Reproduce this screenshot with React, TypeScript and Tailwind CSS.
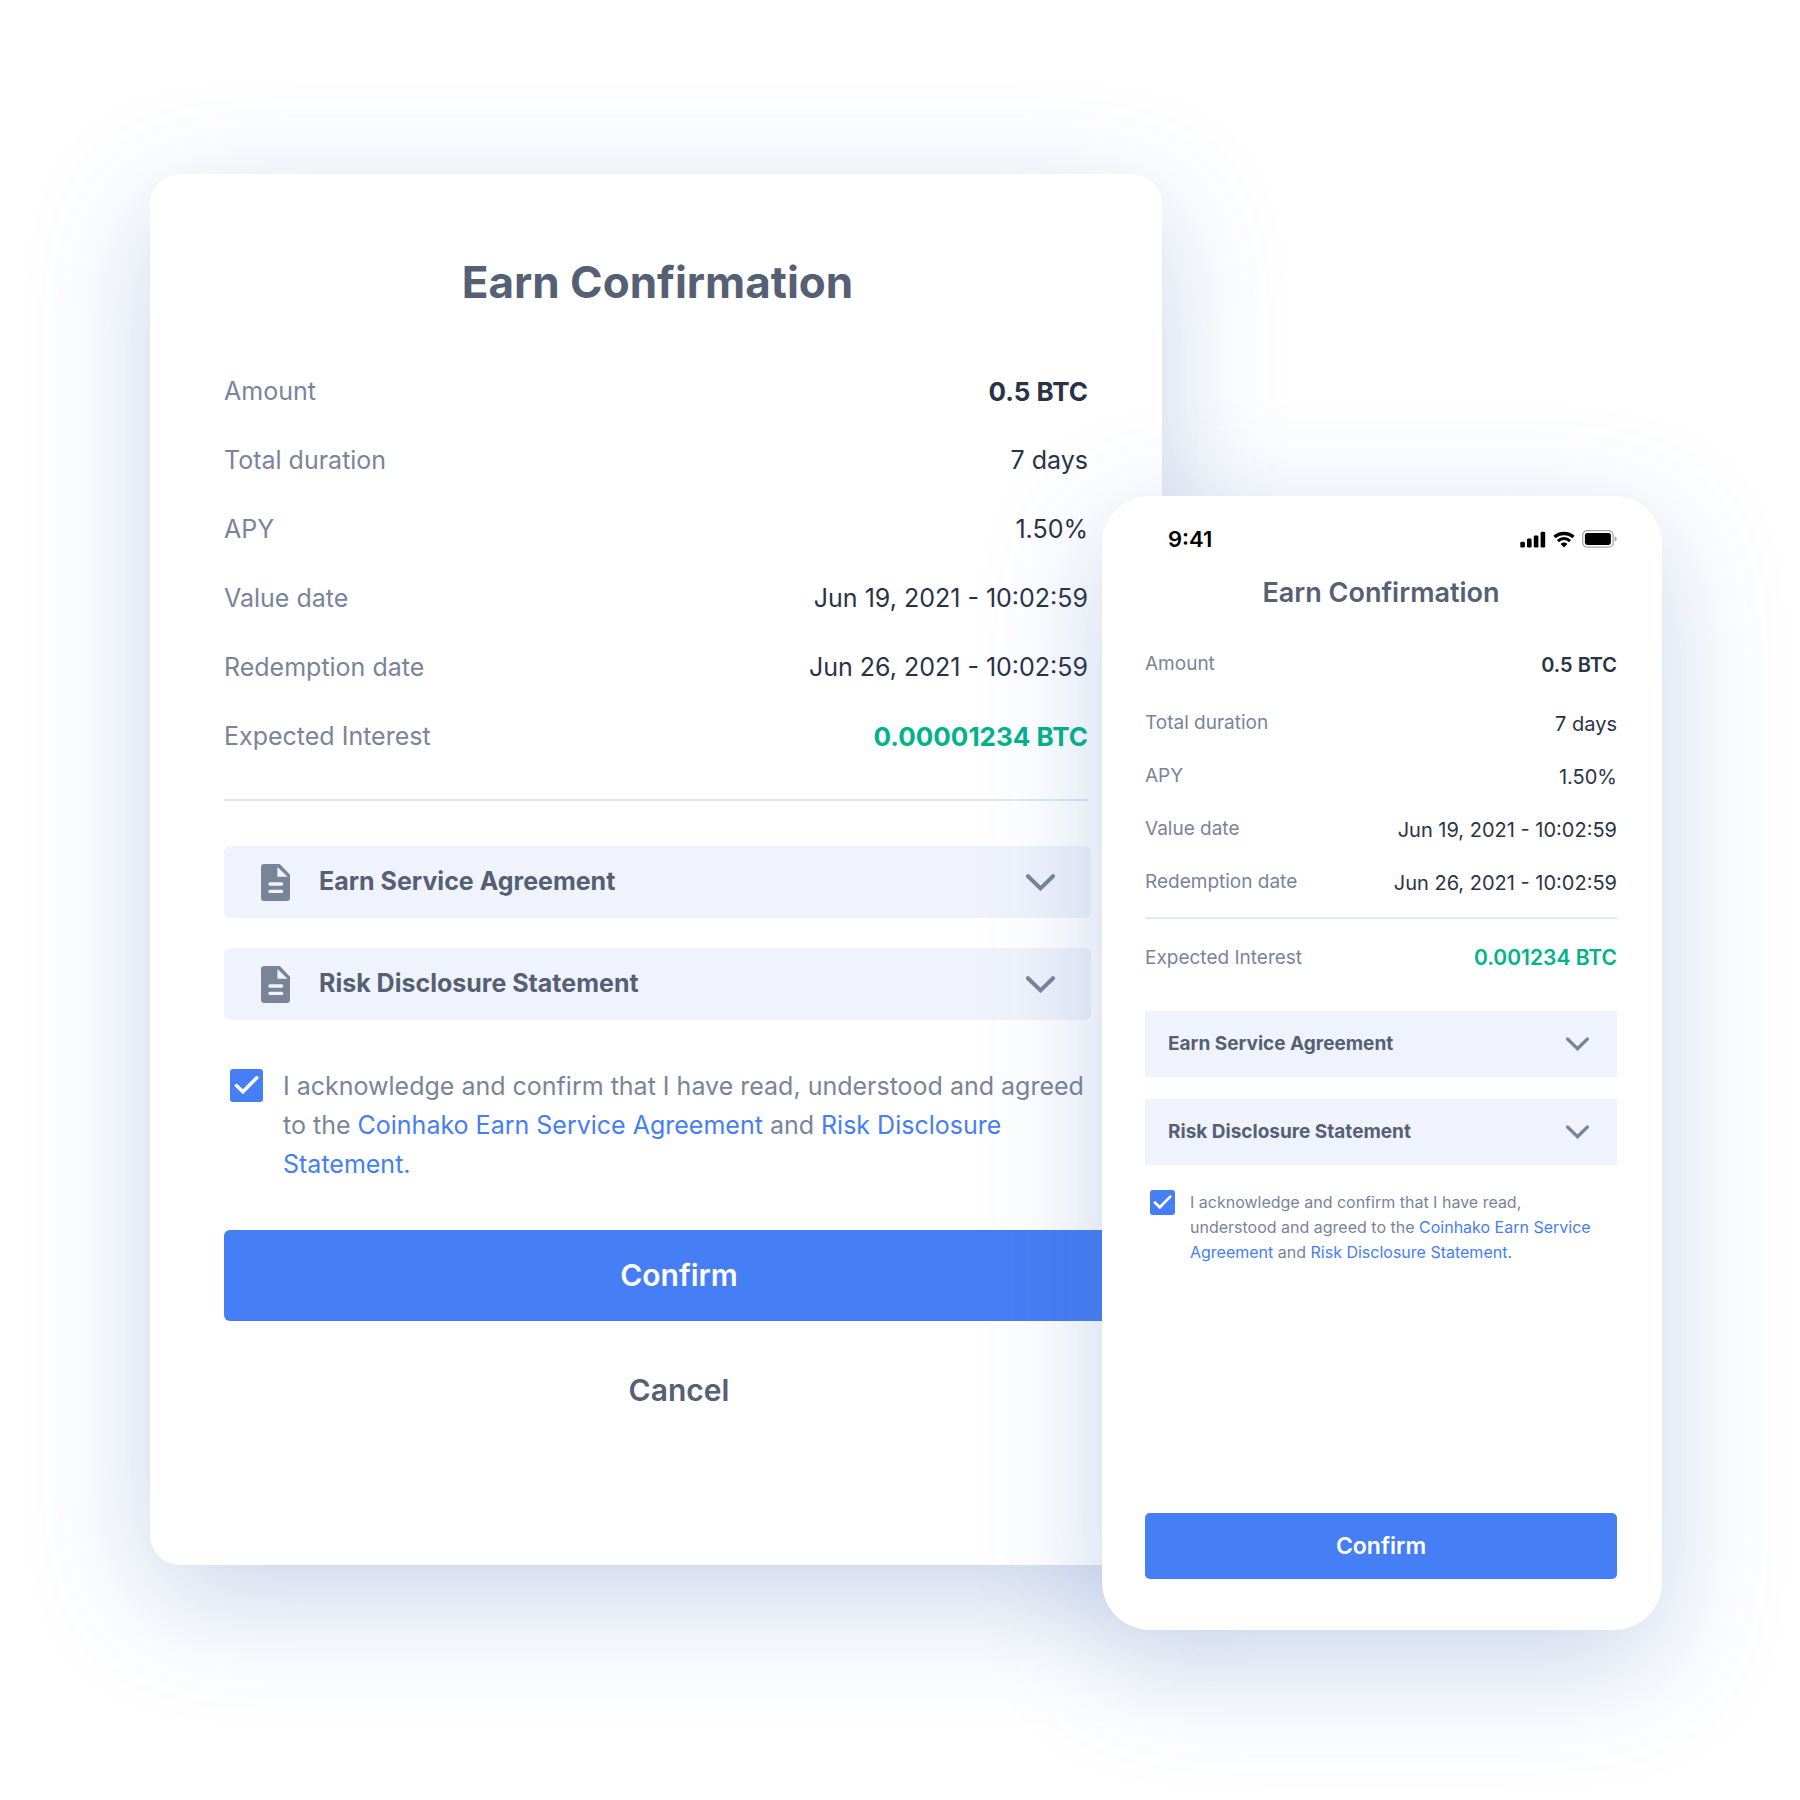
import React, { useState } from 'react';

const desktopRows = [
  { label: 'Amount', value: '0.5 BTC', valueClass: 'text-[26px] font-bold' },
  { label: 'Total duration', value: '7 days' },
  { label: 'APY', value: '1.50%' },
  { label: 'Value date', value: 'Jun 19, 2021 - 10:02:59' },
  { label: 'Redemption date', value: 'Jun 26, 2021 - 10:02:59' },
  { label: 'Expected Interest', value: '0.00001234 BTC', valueClass: 'text-[26px] font-bold text-[#00b389]' },
];

const mobileRows = [
  { label: 'Amount', value: '0.5 BTC', valueClass: 'font-semibold' },
  { label: 'Total duration', value: '7 days' },
  { label: 'APY', value: '1.50%' },
  { label: 'Value date', value: 'Jun 19, 2021 - 10:02:59' },
  { label: 'Redemption date', value: 'Jun 26, 2021 - 10:02:59' },
];

const documents = ['Earn Service Agreement', 'Risk Disclosure Statement'];

const DocumentIcon = () => (
  <svg width="29" height="37" viewBox="0 0 29 37" aria-hidden="true">
    <path d="M3.2 0h15.6L29 10.8v23a3.2 3.2 0 0 1-3.2 3.2H3.2A3.2 3.2 0 0 1 0 33.8V3.2A3.2 3.2 0 0 1 3.2 0Z" fill="#7a8499" />
    <path d="M16.4 3v9.7h10.2Z" fill="#f0f3fb" />
    <path d="M9 20h11.6M9 27.4h11.6" stroke="#f0f3fb" strokeWidth="3.4" strokeLinecap="round" />
  </svg>
);

const Chevron = ({ className }: { className: string }) => (
  <svg className={className} viewBox="0 0 29 17" fill="none" aria-hidden="true">
    <path d="M2 2.2 14.5 14.4 27 2.2" stroke="#7a8499" strokeWidth="4" strokeLinecap="round" />
  </svg>
);

const Checkbox = ({ id, checked, onChange, className }: { id: string; checked: boolean; onChange: (v: boolean) => void; className: string }) => (
  <span className={`relative flex-shrink-0 ${className}`}>
    <input
      id={id}
      type="checkbox"
      checked={checked}
      onChange={e => onChange(e.target.checked)}
      className="block w-full h-full appearance-none rounded-[3px] border-2 border-[#457ef5] checked:bg-[#457ef5] cursor-pointer"
    />
    {checked && (
      <svg className="absolute inset-0 w-full h-full pointer-events-none" viewBox="0 0 33 33" fill="none" aria-hidden="true">
        <path d="M6.4 16.6 12.9 22.8 26.8 8.8" stroke="#fff" strokeWidth="3.5" strokeLinecap="round" />
      </svg>
    )}
  </span>
);

const StatusIcons = () => (
  <div className="flex items-center gap-[7px]">
    <svg width="26" height="17" viewBox="0 0 26 17" aria-hidden="true">
      <rect x="0.3" y="10.8" width="4.6" height="5.8" rx="1.4" />
      <rect x="7" y="7.6" width="4.6" height="9" rx="1.4" />
      <rect x="13.8" y="4.4" width="4.6" height="12.2" rx="1.4" />
      <rect x="20.6" y="0.8" width="4.6" height="15.8" rx="1.4" />
    </svg>
    <svg width="22" height="17" viewBox="0 0 22 17" fill="none" aria-hidden="true">
      <path d="M1.5 6.1C7 1.2 15 1.2 20.5 6.1" stroke="#000" strokeWidth="3.4" />
      <path d="M5 10.1C8.4 6.7 13.6 6.7 17 10.1" stroke="#000" strokeWidth="3" />
      <path d="M7.6 12.9c2-1.9 4.8-1.9 6.8 0L11 16.5Z" fill="#000" />
    </svg>
    <svg width="35" height="18" viewBox="0 0 35 18" fill="none" aria-hidden="true">
      <rect x="0.7" y="0.7" width="30.4" height="16.4" rx="4.4" stroke="#a6a6a6" strokeWidth="1.3" />
      <rect x="2.9" y="2.9" width="26" height="12" rx="2.4" fill="#000" />
      <path d="M32.6 6.2c1.3.5 2.1 1.5 2.1 2.7s-.8 2.2-2.1 2.7Z" fill="#a6a6a6" />
    </svg>
  </div>
);

const DesktopCard = () => {
  const [agreed, setAgreed] = useState(true);

  return (
    <section className="flex-1 min-w-0 bg-white rounded-[30px] shadow-[0_34px_120px_rgba(70,108,182,0.29)] pt-[82px] pl-[74px] pr-[71px] pb-[145px]">
      <h1 className="text-center text-[44px] leading-[52px] font-bold text-[#566074]">Earn Confirmation</h1>

      <dl className="mt-[49px] pr-[3px] text-[25px]">
        {desktopRows.map(row => (
          <div key={row.label} className="flex items-center justify-between h-[69px]">
            <dt className="text-[#7a8499]">{row.label}</dt>
            <dd className={row.valueClass || ''}>{row.value}</dd>
          </div>
        ))}
      </dl>
      <div className="mt-7 mr-[3px] h-0.5 bg-[#e4e8f0]"></div>

      <div className="mt-[45px] space-y-[30px]">
        {documents.map(name => (
          <button key={name} className="w-full h-[72px] flex items-center pl-[37px] pr-9 rounded-md bg-[#f0f3fb] text-[25px] font-bold text-[#566074]">
            <DocumentIcon />
            <span className="ml-[29px] mr-auto">{name}</span>
            <Chevron className="w-[29px] h-[17px]" />
          </button>
        ))}
      </div>

      <div className="mt-[47px] pl-1.5 flex items-start gap-5">
        <Checkbox id="agree-desktop" checked={agreed} onChange={setAgreed} className="w-[33px] h-[33px] mt-0.5" />
        <label htmlFor="agree-desktop" className="text-[25px] leading-[39px] text-[#7a8499]">
          I acknowledge and confirm that I have read, understood and agreed to the{' '}
          <a href="#earn" className="text-[#457ef5]">Coinhako Earn Service Agreement</a> and{' '}
          <a href="#risk" className="text-[#457ef5]">Risk Disclosure Statement.</a>
        </label>
      </div>

      {/* Actions run wider than the details above */}
      <div className="mt-[46px] -mr-[43px] flex flex-col text-[30px] font-semibold">
        <button className="h-[91px] rounded-md bg-[#457ef5] text-white">Confirm</button>
        <button className="mt-[39px] h-[60px] text-[#566074]">Cancel</button>
      </div>
    </section>
  );
};

const MobileCard = () => {
  const [agreed, setAgreed] = useState(true);

  return (
    <section className="relative z-10 w-[560px] flex-shrink-0 -ml-[60px] mt-[322px] bg-white rounded-[48px] shadow-[0_34px_120px_rgba(70,108,182,0.29)] pt-[29px] pl-[43px] pr-[45px] pb-[51px]">
      <div className="flex items-center justify-between pl-[23px] text-[22px] leading-7 font-semibold text-black">
        <span>9:41</span>
        <StatusIcons />
      </div>
      <h2 className="mt-[22px] text-center text-[27px] leading-9 font-semibold text-[#566074]">Earn Confirmation</h2>

      <dl className="mt-[27px]">
        {mobileRows.map(row => (
          <div key={row.label} className="flex items-center justify-between h-[53px] first:mb-1.5">
            <dt className="text-[19px] text-[#7a8499]">{row.label}</dt>
            <dd className={`text-[20px] ${row.valueClass || ''}`}>{row.value}</dd>
          </div>
        ))}
        <div className="mt-2 pt-3 border-t-2 border-[#e4e8f0] flex items-center justify-between">
          <dt className="text-[19px] leading-[53px] text-[#7a8499]">Expected Interest</dt>
          <dd className="text-[21px] font-semibold text-[#00b389]">0.001234 BTC</dd>
        </div>
      </dl>

      <div className="mt-[27px] space-y-[22px]">
        {documents.map(name => (
          <button key={name} className="w-full h-[66px] flex items-center justify-between pl-[23px] pr-7 bg-[#f0f3fb] text-[19px] font-bold text-[#566074]">
            {name}
            <Chevron className="w-[23px] h-[14px]" />
          </button>
        ))}
      </div>

      <div className="mt-[25px] pl-[5px] pr-4 flex items-start gap-[15px]">
        <Checkbox id="agree-mobile" checked={agreed} onChange={setAgreed} className="w-[25px] h-[25px]" />
        <label htmlFor="agree-mobile" className="text-[16px] leading-[25px] text-[#7a8499]">
          I acknowledge and confirm that I have read, understood and agreed to the{' '}
          <a href="#earn" className="text-[#457ef5]">Coinhako Earn Service Agreement</a> and{' '}
          <a href="#risk" className="text-[#457ef5]">Risk Disclosure Statement.</a>
        </label>
      </div>

      <button className="mt-[248px] w-full h-[66px] rounded-[5px] bg-[#457ef5] text-[23px] font-semibold text-white">Confirm</button>
    </section>
  );
};

const App = () => (
  <main className="min-h-screen overflow-hidden bg-white font-['Inter',sans-serif] text-[#2a3346]">
    <div className="flex items-start pt-[174px] pl-[150px] pr-[138px] pb-[170px]">
      <DesktopCard />
      <MobileCard />
    </div>
  </main>
);

export default App;
